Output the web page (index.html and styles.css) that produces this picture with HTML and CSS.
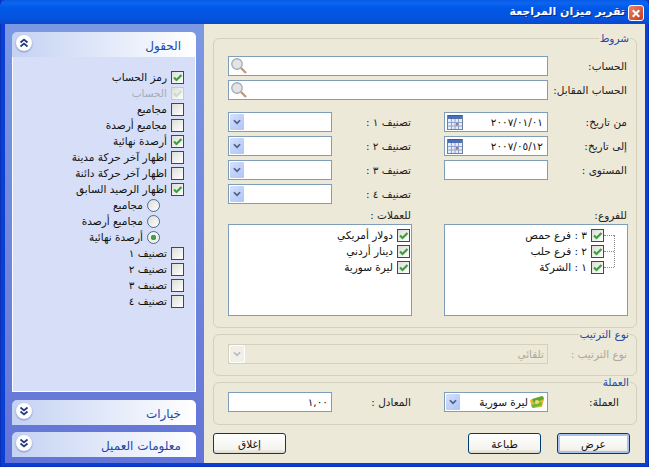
FILE: index.html
```html
<!DOCTYPE html>
<html lang="ar" dir="rtl">
<head>
<meta charset="utf-8">
<title>تقرير ميزان المراجعة</title>
<link rel="stylesheet" href="styles.css">
</head>
<body>
<svg class="sprite" aria-hidden="true">
  <symbol id="tick" viewBox="0 0 11 11"><path d="M2 5.500 4.500 8 9.500 3" fill="none" stroke="#3f9f3f" stroke-width="2.200"/></symbol>
  <symbol id="chev" viewBox="0 0 16 18"><path d="M4.500 7 8 10.500 11.500 7" fill="none" stroke="#4d6185" stroke-width="2"/></symbol>
  <symbol id="lens" viewBox="0 0 18 18"><circle cx="7" cy="7" r="5.200" fill="#e2e5e8" stroke="#a9adb0" stroke-width="1.400"/><path d="M11 11 16 16" stroke="#c29a7c" stroke-width="2.400"/></symbol>
  <symbol id="cal" viewBox="0 0 16 16"><rect x=".5" y="1.500" width="15" height="14" fill="#e6edfa" stroke="#6f7f9c"/><rect x="1" y="2" width="14" height="3" fill="#4f6fb5"/><path d="M2 1v1M4 1v1M6 1v1M8 1v1M10 1v1M12 1v1M14 1v1" stroke="#333"/><path d="M1 8.500h14M1 12h14M4.500 5v10M8 5v10M11.500 5v10" stroke="#8ea4d2"/><rect x="9" y="9" width="2" height="2.500" fill="#d8643f"/></symbol>
  <symbol id="up" viewBox="0 0 12 12"><path d="M2.500 5.500 6 2.500 9.500 5.500M2.500 9.500 6 6.500 9.500 9.500" fill="none" stroke="#21367f" stroke-width="1.700"/></symbol>
  <symbol id="down" viewBox="0 0 12 12"><path d="M2.500 2.500 6 5.500 9.500 2.500M2.500 6.500 6 9.500 9.500 6.500" fill="none" stroke="#21367f" stroke-width="1.700"/></symbol>
</svg>

<div class="window">
  <header class="titlebar">
    <span class="close"><svg viewBox="0 0 15 15" width="15" height="15"><path d="M4 4 11 11M11 4 4 11" stroke="#fff" stroke-width="2.200"/></svg></span>
    <h1 class="title">تقرير ميزان المراجعة</h1>
  </header>

  <div class="client">
    <main class="main">
      <fieldset class="group group-cond">
        <legend>شروط</legend>
        <div class="row"><label class="lbl">الحساب:</label><div class="field wide"><span class="grow"></span><svg class="lens"><use href="#lens"/></svg></div></div>
        <div class="row"><label class="lbl">الحساب المقابل:</label><div class="field wide"><span class="grow"></span><svg class="lens"><use href="#lens"/></svg></div></div>
        <div class="cols">
          <div class="col">
            <div class="row"><label class="lbl">من تاريخ:</label><div class="field"><span class="grow val val-date" dir="ltr">٢٠٠٧/٠١/٠١</span><svg class="cal"><use href="#cal"/></svg></div></div>
            <div class="row"><label class="lbl">إلى تاريخ:</label><div class="field"><span class="grow val val-date" dir="ltr">٢٠٠٧/٠٥/١٢</span><svg class="cal"><use href="#cal"/></svg></div></div>
            <div class="row"><label class="lbl">المستوى :</label><div class="field"></div></div>
            <div class="list-label list-label-first">للفروع:</div>
            <div class="list list-tree">
              <div class="tree-line"></div>
              <div class="item treed"><svg class="box"><use href="#tick"/></svg><span>٣ : فرع حمص</span></div>
              <div class="item treed"><svg class="box"><use href="#tick"/></svg><span>٢ : فرع حلب</span></div>
              <div class="item treed"><svg class="box"><use href="#tick"/></svg><span>١ : الشركة</span></div>
            </div>
          </div>
          <div class="col">
            <div class="row"><label class="lbl">تصنيف ١ :</label><div class="field"><span class="grow"></span><span class="drop"><svg><use href="#chev"/></svg></span></div></div>
            <div class="row"><label class="lbl">تصنيف ٢ :</label><div class="field"><span class="grow"></span><span class="drop"><svg><use href="#chev"/></svg></span></div></div>
            <div class="row"><label class="lbl">تصنيف ٣ :</label><div class="field"><span class="grow"></span><span class="drop"><svg><use href="#chev"/></svg></span></div></div>
            <div class="row"><label class="lbl">تصنيف ٤ :</label><div class="field"><span class="grow"></span><span class="drop"><svg><use href="#chev"/></svg></span></div></div>
            <div class="list-label">للعملات :</div>
            <div class="list list-plain">
              <div class="item"><svg class="box"><use href="#tick"/></svg><span>دولار أمريكي</span></div>
              <div class="item"><svg class="box"><use href="#tick"/></svg><span>دينار أردني</span></div>
              <div class="item"><svg class="box"><use href="#tick"/></svg><span>ليرة سورية</span></div>
            </div>
          </div>
        </div>
      </fieldset>

      <fieldset class="group group-sort">
        <legend>نوع الترتيب</legend>
        <div class="row"><label class="lbl muted">نوع الترتيب :</label><div class="field wide disabled"><span class="grow val muted">تلقائي</span><span class="drop drop-off"><svg><use href="#chev"/></svg></span></div></div>
      </fieldset>

      <fieldset class="group group-cur">
        <legend>العملة</legend>
        <div class="cols cols-tight">
          <div class="row"><label class="lbl lbl-in">العملة:</label><div class="field"><svg class="note" viewBox="0 0 16 16"><path d="M1 6 12 2l3 3-2 8-10 1z" fill="#e8b82c"/><path d="M3 5 14 2l1 3-10 4z" fill="#5aa83c"/><path d="M2 11 12 8l1 3-9 3z" fill="#6cb842"/><circle cx="8" cy="8" r="2" fill="#f4dc6a"/></svg><span class="grow val val-black">ليرة سورية</span><span class="drop"><svg><use href="#chev"/></svg></span></div></div>
          <div class="row"><label class="lbl">المعادل :</label><div class="field"><span class="grow val val-num" dir="ltr">١,٠٠</span></div></div>
        </div>
      </fieldset>

      <div class="actions">
        <button class="btn btn-default" type="button">عرض</button>
        <button class="btn" type="button">طباعة</button>
        <span class="grow"></span>
        <button class="btn" type="button">إغلاق</button>
      </div>
    </main>

    <aside class="side">
      <section class="panel">
        <div class="panel-head"><span class="panel-title">الحقول</span><span class="orb"><svg><use href="#up"/></svg></span></div>
        <div class="panel-body">
          <div class="item"><svg class="box"><use href="#tick"/></svg><span>رمز الحساب</span></div>
          <div class="item off"><svg class="box box-off"><use href="#tick"/></svg><span>الحساب</span></div>
          <div class="item"><span class="box"></span><span>مجاميع</span></div>
          <div class="item"><span class="box"></span><span>مجاميع أرصدة</span></div>
          <div class="item"><svg class="box"><use href="#tick"/></svg><span>أرصدة نهائية</span></div>
          <div class="item"><span class="box"></span><span>اظهار آخر حركة مدينة</span></div>
          <div class="item"><span class="box"></span><span>اظهار آخر حركة دائنة</span></div>
          <div class="item"><svg class="box"><use href="#tick"/></svg><span>اظهار الرصيد السابق</span></div>
          <div class="item sub"><span class="radio"></span><span>مجاميع</span></div>
          <div class="item sub"><span class="radio"></span><span>مجاميع أرصدة</span></div>
          <div class="item sub"><span class="radio radio-on"></span><span>أرصدة نهائية</span></div>
          <div class="item"><span class="box"></span><span>تصنيف ١</span></div>
          <div class="item"><span class="box"></span><span>تصنيف ٢</span></div>
          <div class="item"><span class="box"></span><span>تصنيف ٣</span></div>
          <div class="item"><span class="box"></span><span>تصنيف ٤</span></div>
        </div>
      </section>
      <section class="panel">
        <div class="panel-head"><span class="panel-title">خيارات</span><span class="orb"><svg><use href="#down"/></svg></span></div>
      </section>
      <section class="panel">
        <div class="panel-head"><span class="panel-title">معلومات العميل</span><span class="orb"><svg><use href="#down"/></svg></span></div>
      </section>
    </aside>
  </div>
</div>
</body>
</html>
```
FILE: styles.css
```css
* { box-sizing: border-box; }
html, body { margin: 0; padding: 0; }
body {
  width: 649px;
  height: 467px;
  overflow: hidden;
  font-family: "DejaVu Sans", sans-serif;
  font-size: 10.500px;
  color: #111;
}
.sprite { width: 0; height: 0; display: block; }
.grow { flex: 1; }

.window {
  height: 467px;
  display: flex;
  flex-direction: column;
  background: #0a3fd6;
  padding: 0 3px 3px 4px;
  border-left: 1px solid #0831b8;
  border-right: 1px solid #0831b8;
  border-bottom: 1px solid #0831b8;
}
.titlebar {
  height: 24px;
  margin: 0 -4px 0 -5px;
  padding: 5px 5px 0 0;
  display: flex;
  gap: 3px;
  background: linear-gradient(#0a5ae6 0, #0a66f0 3px, #0058e6 8px, #0553de 18px, #0a48cf 24px);
  border-radius: 6px 6px 0 0;
}
.close {
  width: 16px;
  height: 16px;
  border: 1px solid #fff;
  border-radius: 3px;
  background: linear-gradient(135deg, #e8866a, #c9391a);
  display: flex;
}
.title {
  margin: -2px 0 0;
  font-size: 11px;
  font-weight: bold;
  color: #fff;
  text-shadow: 1px 1px 0 #0a2a8c;
  line-height: 18px;
}
.client {
  flex: 1;
  display: flex;
  min-height: 0;
}

/* main pane */
.main {
  width: 441px;
  flex: none;
  background: #ece9d8;
  padding: 8px 8px 0 9px;
  display: flex;
  flex-direction: column;
}
.group {
  margin: 0;
  padding: 0 8px;
  min-width: 0;
  border: 1px solid #d3d0bd;
  border-radius: 6px;
}
.group legend {
  padding: 0 1px;
  margin-right: -2px;
  color: #2349a8;
  line-height: 13px;
  height: 13px;
}
.group-cond { height: 296px; padding-top: 11px; }
.group-sort { height: 48px; padding-top: 3px; padding-left: 16px; }
.group-cur { height: 49px; padding-top: 3px; }

.row { display: flex; align-items: center; height: 20px; margin-bottom: 4px; }
.lbl { width: 80px; flex: none; color: #222; padding-right: 1px; }
.lbl-in { padding-right: 9px; }
.muted { color: #aca899; }

.field {
  flex: 1;
  height: 20px;
  display: flex;
  align-items: center;
  background: #fff;
  border: 1px solid #7f9db9;
}
.wide { flex: none; width: 320px; }
.disabled { background: #ece9d8; border-color: #d3d0bd; }
.val { padding: 0 3px; line-height: 18px; }
.val-date { text-align: right; padding-right: 4px; letter-spacing: 0.3px; }
.val-black { color: #111; padding-right: 1px; }
.val-num { text-align: right; padding-right: 3px; }

.lens { width: 18px; height: 18px; margin-left: 1px; }
.cal { width: 16px; height: 16px; margin-left: 2px; }
.note { width: 16px; height: 16px; margin-right: 2px; }
.drop {
  width: 16px;
  height: 18px;
  display: block;
  background: linear-gradient(135deg, #d4e0fb, #aec4f6);
  border: 1px solid #fff;
  border-radius: 2px;
}
.drop svg { width: 14px; height: 16px; display: block; }
.drop-off { background: #f1efe6; }
.drop-off svg { opacity: .35; }

.cols {
  display: grid;
  grid-template-columns: 184px 184px;
  column-gap: 32px;
  margin-top: 12px;
}
.cols-tight { margin-top: 0; }
.col { display: flex; flex-direction: column; }
.list-label { height: 15px; margin-top: 1px; padding-right: 1px; line-height: 13px; color: #222; }
.list-label-first { margin-top: 25px; }
.list {
  position: relative;
  height: 92px;
  background: #fff;
  border: 1px solid #7f9db9;
  padding: 2px 1px 0 0;
}
.list-tree { padding-right: 23px; }
.item {
  display: flex;
  align-items: center;
  height: 16px;
  gap: 4px;
  white-space: nowrap;
}
.box {
  width: 13px;
  height: 13px;
  flex: none;
  display: block;
  border: 1px solid #1c5180;
  background: linear-gradient(135deg, #dcdcd7, #fff);
}
.box-off { border-color: #c0c8da; }
.box-off use { opacity: 0.2; }
.off { color: #a7acba; }
.tree-line {
  position: absolute;
  top: 10px;
  right: 12px;
  width: 1px;
  height: 32px;
  border-right: 1px dotted #8a8a8a;
}
.treed { position: relative; }
.treed::before {
  content: "";
  position: absolute;
  right: -10px;
  top: 8px;
  width: 10px;
  border-top: 1px dotted #8a8a8a;
}

.actions {
  display: flex;
  gap: 16px;
  margin-top: 8px;
  padding-right: 7px;
}
.btn {
  width: 73px;
  height: 21px;
  padding: 0;
  font: inherit;
  color: #111;
  background: linear-gradient(#fff, #f4f3ee 80%, #dcd8ca);
  border: 1px solid #003c74;
  border-radius: 3px;
}
.btn-default { box-shadow: inset 0 0 0 2px #a9c4ec; }

/* side bar */
.side {
  flex: 1;
  background: linear-gradient(#7d98e3, #6375d6);
  padding: 8px 8px 0 7px;
  display: flex;
  flex-direction: column;
  gap: 7px;
}
.panel-head {
  height: 25px;
  display: flex;
  justify-content: space-between;
  align-items: flex-start;
  padding: 2px 4px 0 0;
  background: linear-gradient(to left, #fff, #c4d2f3);
  border-radius: 5px 5px 0 0;
}
.panel-title {
  color: #2349a8;
  font-size: 12px;
  padding-right: 11px;
  padding-top: 5px;
  line-height: 14px;
}
.orb {
  width: 16px;
  height: 16px;
  margin-left: 4px;
  margin-top: 1px;
  border-radius: 50%;
  background: #fff;
  box-shadow: 0 1px 2px #7a8cc0;
  display: flex;
  align-items: center;
  justify-content: center;
}
.orb svg { width: 12px; height: 12px; display: block; }
.panel-body {
  height: 335px;
  background: #d6dff7;
  border: 1px solid #fff;
  border-top: 0;
  padding: 12px 11px 0 0;
  margin-bottom: 1px;
}
.sub { padding-right: 24px; }
.radio {
  width: 13px;
  height: 13px;
  flex: none;
  display: block;
  border: 1px solid #4a6c8c;
  border-radius: 50%;
  background: linear-gradient(135deg, #dcdcd7, #fff);
}
.radio-on { background: radial-gradient(circle, #45a045 0 2.500px, #f2f2ec 3px); }
```
